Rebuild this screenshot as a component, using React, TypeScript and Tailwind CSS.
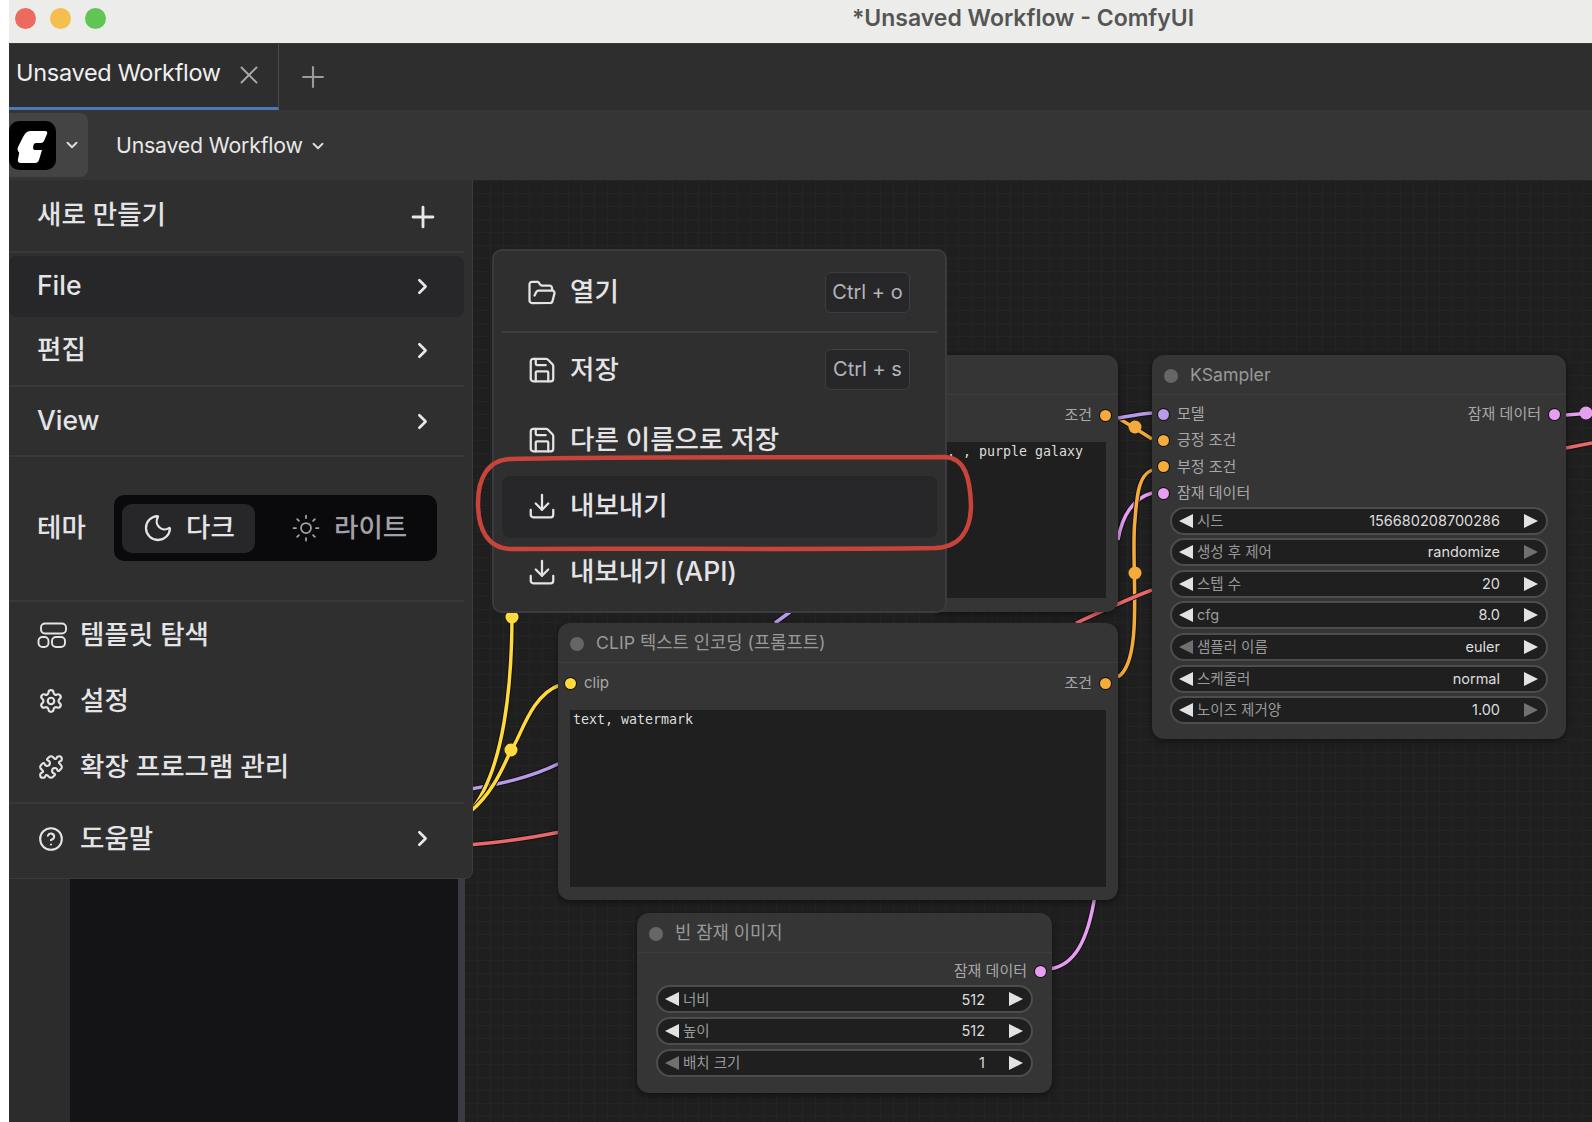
import { ChevronDown, ChevronRight, CircleHelp, Download, FolderOpen, Moon, Plus, Puzzle, Save, Settings, Sun, X } from 'lucide-react'
import type { ReactNode } from 'react'

const FONT = 'font-[Inter,"Noto_Sans_CJK_KR",sans-serif]'
const MENU_TEXT = 'text-[26.500px] font-medium text-[#e4e4e7]'

function TemplateIcon() {
  return (
    <svg width="30" height="28" viewBox="0 0 30 28" fill="none" stroke="currentColor" strokeWidth="1.9">
      <rect x="4" y="2.500" width="25" height="10" rx="4" />
      <rect x="1.500" y="16" width="10" height="10" rx="4" />
      <rect x="15" y="16" width="13" height="10" rx="4" />
    </svg>
  )
}

function Logo() {
  return (
    <div className="w-[47px] h-[49px] bg-black rounded-[10px] flex items-center justify-center">
      <svg width="47" height="49" viewBox="0 0 47 49" fill="white">
        <path d="M21 10 H36 Q39 10 38 13 L35 20 Q34 22 32 22 H27 Q25 22 24.500 24 L24 27 Q24 29 26 29 H33 L30 39 Q29 42 26 42 H12 Q8 42 9 38 L10 33 Q11 32 9 30 Q8 28 9 26 L14 16 Q17 10 21 10 Z" />
      </svg>
    </div>
  )
}

function MenuRow({ label, icon, arrow, className }: { label: string; icon?: ReactNode; arrow?: boolean; className?: string }) {
  return (
    <div className={`flex items-center ${MENU_TEXT} ${className ?? ''}`}>
      {icon && <span className="w-[43px] flex items-center shrink-0">{icon}</span>}
      <span className="flex-1">{label}</span>
      {arrow && <ChevronRight size={25} strokeWidth={2.5} className="text-[#e8e8e8] mr-[1px]" />}
    </div>
  )
}

function MainMenu() {
  return (
    <div className="absolute left-0 top-[-1px] w-[464px] h-[700px] bg-[#2f2f2f] rounded-br-lg flex flex-col border-r border-b border-[#3a3a40]">
      <div className="h-[74px] border-b-2 border-[#38383d] pl-[28px] pr-[28px] flex items-center mr-[8px]">
        <span className={`flex-1 ${MENU_TEXT}`}>새로 만들기</span>
        <Plus size={34} strokeWidth={2} className="text-[#e8e8e8] mr-[-4px] mt-[4px]" />
      </div>
      <div className="h-[66px] mr-[8px] flex items-center">
        <MenuRow label="File" arrow className="w-full h-[61px] bg-[#27272a] rounded-lg pl-[28px] pr-[28px]" />
      </div>
      <div className="h-[68px] mr-[8px] border-b-2 border-[#38383d] pb-[4px] flex items-center">
        <MenuRow label="편집" arrow className="w-full pl-[28px] pr-[28px]" />
      </div>
      <div className="h-[70px] mr-[8px] border-b-2 border-[#38383d] flex items-center">
        <MenuRow label="View" arrow className="w-full pl-[28px] pr-[28px]" />
      </div>
      <div className="h-[145px] mr-[8px] border-b-2 border-[#38383d] flex items-center pl-[28px] pb-[1px]">
        <span className={`w-[77px] ${MENU_TEXT}`}>테마</span>
        <div className="w-[323px] h-[66px] rounded-[10px] bg-[#0a0a0c] flex items-center pl-[8px]">
          <div className={`w-[133px] h-[49px] rounded-[10px] bg-[#27272a] flex items-center pl-[20px] gap-[12px] ${MENU_TEXT}`}>
            <Moon size={32} strokeWidth={1.7} />
            <span>다크</span>
          </div>
          <div className="flex items-center pl-[36px] gap-[13px] text-[26.500px] font-medium text-[#a1a1aa]">
            <Sun size={30} strokeWidth={1.4} />
            <span>라이트</span>
          </div>
        </div>
      </div>
      <div className="h-[202px] mr-[8px] border-b-2 border-[#38383d] pl-[28px] pr-[28px]">
        <MenuRow label="템플릿 탐색" icon={<TemplateIcon />} className="h-[66px] pb-[1px]" />
        <MenuRow label="설정" icon={<Settings size={26} strokeWidth={2} className="ml-[1px]" />} className="h-[66px]" />
        <MenuRow label="확장 프로그램 관리" icon={<Puzzle size={26} strokeWidth={1.9} className="ml-[1px]" />} className="h-[66px] pb-[1px]" />
      </div>
      <div className="flex-1 mr-[8px] flex items-center pl-[28px] pr-[28px] pb-[5px]">
        <MenuRow label="도움말" icon={<CircleHelp size={26} strokeWidth={1.9} className="ml-[1px]" />} arrow className="w-full" />
      </div>
    </div>
  )
}

function Kbd({ children }: { children: string }) {
  return (
    <span className="w-[85px] h-[41px] flex items-center justify-center rounded-md bg-[#27272a] border border-[#3d3d44] text-[20px] font-normal text-[#b4b4ba]">
      {children}
    </span>
  )
}

function FileMenu() {
  const iconClass = 'mr-[13px] shrink-0'
  return (
    <div className="absolute left-[483px] top-[69px] w-[455px] h-[364px] bg-[#2f2f2f] border-2 border-[#3a3a40] rounded-[10px] flex flex-col px-[8px] z-10">
      <div className={`h-[82px] border-b-2 border-[#3c3c42] flex items-center pl-[25px] pr-[27px] ${MENU_TEXT}`}>
        <FolderOpen size={30} strokeWidth={1.8} className={`${iconClass} mt-[3px]`} />
        <span className="flex-1 pt-[1px]">열기</span>
        <span className="pt-[2px]">
          <Kbd>Ctrl + o</Kbd>
        </span>
      </div>
      <div className={`h-[72px] flex items-center pl-[25px] pr-[27px] ${MENU_TEXT}`}>
        <Save size={30} strokeWidth={1.8} className={`${iconClass} mt-[2px]`} />
        <span className="flex-1 pt-[2px]">저장</span>
        <Kbd>Ctrl + s</Kbd>
      </div>
      <div className={`h-[64px] flex items-center pl-[25px] pt-[5px] ${MENU_TEXT}`}>
        <Save size={30} strokeWidth={1.8} className={iconClass} />
        <span>다른 이름으로 저장</span>
      </div>
      <div className={`h-[62px] mt-[7px] flex items-center pl-[25px] pb-[2px] bg-[#27272a] rounded-lg ${MENU_TEXT}`}>
        <Download size={30} strokeWidth={1.8} className={iconClass} />
        <span>내보내기</span>
      </div>
      <div className={`h-[70px] flex items-center pl-[25px] pb-[2px] ${MENU_TEXT}`}>
        <Download size={30} strokeWidth={1.8} className={iconClass} />
        <span>내보내기 (API)</span>
      </div>
    </div>
  )
}

const TRI_ON = '#e2e2e2'
const TRI_OFF = '#707070'

function Widget({ label, value, leftOff, rightOff }: { label: string; value: string; leftOff?: boolean; rightOff?: boolean }) {
  return (
    <div className="h-[28px] rounded-full border-2 border-[#4d4d4d] bg-[#1f1f1f] flex items-center pl-[7px] pr-[8px] text-[14.500px]">
      <svg width="14" height="14" viewBox="0 0 14 14" className="shrink-0">
        <polygon points="0,7 14,0 14,14" fill={leftOff ? TRI_OFF : TRI_ON} />
      </svg>
      <span className="ml-[4px] flex-1 text-[#9a9a9a]">{label}</span>
      <span className="text-[#dddddd]">{value}</span>
      <svg width="14" height="14" viewBox="0 0 14 14" className="ml-[24px] shrink-0">
        <polygon points="0,0 14,7 0,14" fill={rightOff ? TRI_OFF : TRI_ON} />
      </svg>
    </div>
  )
}

function Dot({ color }: { color: string }) {
  return <span className={`w-[11px] h-[11px] rounded-full ring-1 ring-black/70 shrink-0 ${color}`} />
}

function Slot({ label, color, side }: { label: string; color: string; side: 'in' | 'out' }) {
  if (side === 'in') {
    return (
      <div className="flex items-center gap-[8px] text-[15px] text-[#a8a8a8] h-[26.400px]">
        <Dot color={color} />
        <span>{label}</span>
      </div>
    )
  }
  return (
    <div className="flex items-center justify-end gap-[8px] text-[15px] text-[#a8a8a8] h-[26.400px]">
      <span>{label}</span>
      <Dot color={color} />
    </div>
  )
}

function NodeFrame({ title, className, children }: { title?: string; className: string; children: ReactNode }) {
  return (
    <div className={`absolute bg-[#353535] rounded-xl shadow-[0_2px_6px_rgba(0,0,0,0.5)] flex flex-col ${className}`}>
      <div className="h-[40px] shrink-0 border-b border-[#3d3d3d] flex items-center pl-[12px] pt-[2px] gap-[12px] text-[17.700px] text-[#999999]">
        {title && <span className="w-[14px] h-[14px] rounded-full bg-[#666666] shrink-0" />}
        {title && <span>{title}</span>}
      </div>
      {children}
    </div>
  )
}

const TEXTAREA = "bg-[#1f1f1f] px-[3px] font-['DejaVu_Sans_Mono',monospace] text-[13.300px] leading-[20px] text-[#dddddd] whitespace-pre"

function Wires() {
  const wires: { d: string; color: string }[] = [
    { d: 'M 1050 969 C 1075 965 1088 940 1095 895', color: '#e79df2' },
    { d: 'M 1118 540 C 1122 515 1134 498 1152 493', color: '#e79df2' },
    { d: 'M 1118 677 C 1145 660 1130 560 1135 520 C 1137 490 1140 475 1152 470', color: '#f4ab3c' },
    { d: 'M 1118 418 C 1118 418 1135 428 1152 439', color: '#f4ab3c' },
    { d: 'M 1118 418 C 1130 416 1140 414 1152 413', color: '#b79ae8' },
    { d: 'M 465 790 C 500 784 530 778 560 763', color: '#b79ae8' },
    { d: 'M 775 623 L 790 612', color: '#b79ae8' },
    { d: 'M 465 845 C 500 843 530 838 560 832', color: '#e9686a' },
    { d: 'M 1076 623 C 1100 612 1130 598 1152 590', color: '#e9686a' },
    { d: 'M 1566 448 L 1592 443', color: '#e9686a' },
    { d: 'M 1566 415 L 1592 413', color: '#e79df2' },
    { d: 'M 512 615 C 512 680 505 770 470 812', color: '#ffd93d' },
    { d: 'M 560 685 C 530 695 520 740 511 750 C 500 775 490 795 470 812', color: '#ffd93d' },
  ]
  return (
    <svg className="absolute left-[-9px] top-[-180px]" width="1592" height="1122" fill="none">
      {wires.map((w) => (
        <g key={w.d}>
          <path d={w.d} stroke="#111111" strokeWidth="5.500" />
          <path d={w.d} stroke={w.color} strokeWidth="3.500" />
        </g>
      ))}
      <circle cx="1135" cy="427" r="6.500" fill="#f4ab3c" />
      <circle cx="1135" cy="573" r="6.500" fill="#f4ab3c" />
      <circle cx="511" cy="750" r="6.500" fill="#ffd93d" />
      <circle cx="512" cy="617" r="6.500" fill="#ffd93d" />
      <circle cx="1586" cy="413" r="6.500" fill="#e79df2" />
    </svg>
  )
}

function Highlight() {
  return (
    <svg className="absolute left-[-9px] top-[-180px] z-20 pointer-events-none" width="1592" height="1122" fill="none">
      <path
        d="M 510 459 C 640 456 820 458 945 457 C 965 458 970 478 971 505 C 971 530 960 547 935 548 C 800 550 640 548 510 549 C 488 548 478 530 478 503 C 478 478 488 460 510 459 Z"
        stroke="#c8443a"
        strokeWidth="4.500"
      />
    </svg>
  )
}

export default function App() {
  return (
    <div className={`w-[1592px] h-[1122px] bg-white pl-[9px] overflow-hidden ${FONT}`}>
      <div className="h-full flex flex-col">
        <div className="h-[44px] shrink-0 bg-[#ecedeb] border-b border-[#3a3a3a] relative flex items-center justify-center pb-[7px]">
          <div className="absolute left-[6px] top-[8px] flex gap-[14px]">
            <span className="w-[21px] h-[21px] rounded-full bg-[#ec6a5e]" />
            <span className="w-[21px] h-[21px] rounded-full bg-[#f4bf4f]" />
            <span className="w-[21px] h-[21px] rounded-full bg-[#61c554]" />
          </div>
          <span className="text-[23px] font-semibold text-[#555555] pl-[445px]">*Unsaved Workflow - ComfyUI</span>
        </div>
        <div className="h-[66px] shrink-0 bg-[#2e2e2e] flex items-stretch">
          <div className="w-[270px] border-r border-[#4a4a4a] border-b-[3px] border-b-[#4a78b8] bg-[#2e2e2e] flex items-center pl-[7px] pb-[5px]">
            <span className="text-[23.500px] text-[#f0f0f0] tracking-[-0.300px]">Unsaved Workflow</span>
            <X size={30} strokeWidth={1.5} className="ml-[13px] mt-[3px] text-[#a8a8a8]" />
          </div>
          <div className="pl-[17px] flex items-center">
            <Plus size={34} strokeWidth={1.5} className="text-[#9a9a9a]" />
          </div>
        </div>
        <div className="h-[70px] shrink-0 bg-[#353535] flex items-center">
          <div className="w-[79px] h-[64px] bg-[#444444] rounded-r-lg flex items-center gap-[7px]">
            <Logo />
            <ChevronDown size={18} strokeWidth={2.5} className="text-[#dddddd]" />
          </div>
          <span className="ml-[28px] pt-[1px] text-[21.300px] text-[#e8e8e8] tracking-[-0.200px]">Unsaved Workflow</span>
          <ChevronDown size={18} strokeWidth={2.5} className="ml-[6px] mt-[1px] text-[#dddddd]" />
        </div>
        <div className="flex-1 relative bg-[#1f1f1f] bg-[linear-gradient(#242424_1px,transparent_1px),linear-gradient(90deg,#242424_1px,transparent_1px)] bg-[size:13px_13px] overflow-hidden">
          <div className="absolute left-0 top-0 bottom-0 w-[456px] flex">
            <div className="w-[61px] bg-[#2c2c2c]" />
            <div className="w-[388px] bg-[#141416]" />
            <div className="w-[7px] bg-[#3a3a40]" />
          </div>
          <Wires />
          <NodeFrame className="left-[920px] top-[175px] w-[189px] h-[257px]">
            <div className="flex-1 flex flex-col px-[12px] pt-[7px]">
              <div className="flex items-center justify-end gap-[8px] h-[26px] mr-[-5px] text-[15px] text-[#a8a8a8]">
                <span>조건</span>
                <Dot color="bg-[#f4ab3c]" />
              </div>
              <div className={`mt-[14px] h-[156px] pl-[6px] ${TEXTAREA}`}>, , purple galaxy</div>
            </div>
          </NodeFrame>
          <NodeFrame title="CLIP 텍스트 인코딩 (프롬프트)" className="left-[549px] top-[443px] w-[560px] h-[277px]">
            <div className="flex-1 flex flex-col px-[12px] pt-[7px]">
              <div className="flex items-center justify-between h-[26px] mx-[-5px]">
                <div className="flex items-center gap-[8px] text-[15px] text-[#a8a8a8]">
                  <Dot color="bg-[#ffd93d]" />
                  <span>clip</span>
                </div>
                <div className="flex items-center gap-[8px] text-[15px] text-[#a8a8a8]">
                  <span>조건</span>
                  <Dot color="bg-[#f4ab3c]" />
                </div>
              </div>
              <div className={`mt-[14px] h-[177px] ${TEXTAREA}`}>text, watermark</div>
            </div>
          </NodeFrame>
          <NodeFrame title="KSampler" className="left-[1143px] top-[175px] w-[414px] h-[384px]">
            <div className="flex pl-[6px] pr-[6px] pt-[6px]">
              <div className="flex-1">
                <Slot side="in" label="모델" color="bg-[#b79ae8]" />
                <Slot side="in" label="긍정 조건" color="bg-[#f4ab3c]" />
                <Slot side="in" label="부정 조건" color="bg-[#f4ab3c]" />
                <Slot side="in" label="잠재 데이터" color="bg-[#e79df2]" />
              </div>
              <div className="flex-1">
                <Slot side="out" label="잠재 데이터" color="bg-[#e79df2]" />
              </div>
            </div>
            <div className="flex flex-col gap-[3.600px] px-[18px]">
              <Widget label="시드" value="156680208700286" />
              <Widget label="생성 후 제어" value="randomize" rightOff />
              <Widget label="스텝 수" value="20" />
              <Widget label="cfg" value="8.0" />
              <Widget label="샘플러 이름" value="euler" leftOff />
              <Widget label="스케줄러" value="normal" />
              <Widget label="노이즈 제거양" value="1.00" rightOff />
            </div>
          </NodeFrame>
          <NodeFrame title="빈 잠재 이미지" className="left-[628px] top-[733px] w-[415px] h-[180px]">
            <div className="pl-[6px] pr-[6px] pt-[5px]">
              <Slot side="out" label="잠재 데이터" color="bg-[#e79df2]" />
            </div>
            <div className="flex flex-col gap-[3.600px] px-[19px] pt-[1px]">
              <Widget label="너비" value="512" />
              <Widget label="높이" value="512" />
              <Widget label="배치 크기" value="1" leftOff />
            </div>
          </NodeFrame>
          <MainMenu />
          <FileMenu />
          <Highlight />
        </div>
      </div>
    </div>
  )
}
